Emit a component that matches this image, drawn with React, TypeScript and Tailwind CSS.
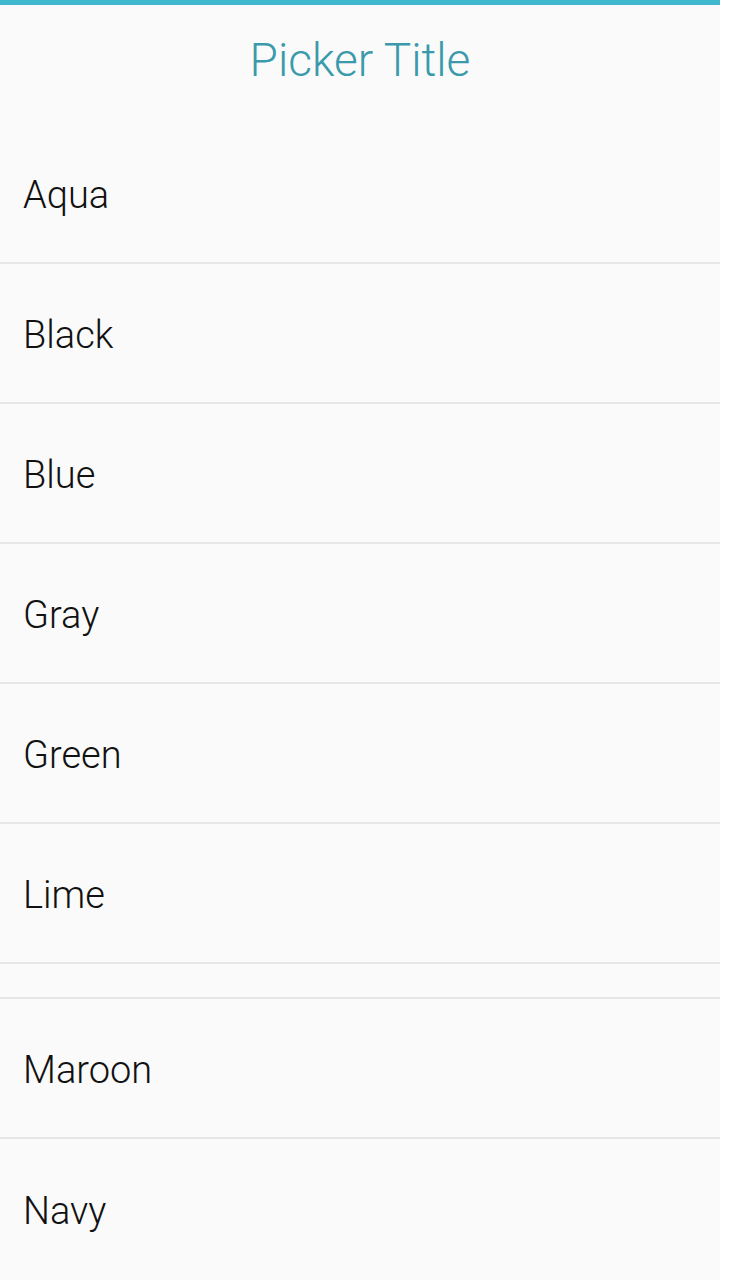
const colors = ["Aqua", "Black", "Blue", "Gray", "Green", "Lime", "", "Maroon", "Navy"];

export default function App() {
  return (
    <div className="flex w-[736px] h-[1280px] overflow-hidden bg-white" style={{ fontFamily: "Roboto, 'Open Sans', sans-serif" }}>
      <div className="w-[720px] bg-[#fafafa] flex flex-col">
        <div className="h-[5px] bg-[#3fb8cf]" />
        <div className="h-[119px] flex justify-center pt-[27px]">
          <h1 className="text-[46px] leading-[56px] font-light text-[#3a9aab]">Picker Title</h1>
        </div>
        {colors.map((c, i) => (
          <div
            key={i}
            className={`${c ? "h-[140px] pt-[4px]" : "h-[35px]"} ${i < colors.length - 1 ? "border-b-2" : "border-b-0"} shrink-0 flex items-center pl-[23px] border-[#e6e6e6] text-[38px] font-light text-[#111]`}
          >
            {c}
          </div>
        ))}
      </div>
      <div className="flex-1 bg-white" />
    </div>
  );
}
